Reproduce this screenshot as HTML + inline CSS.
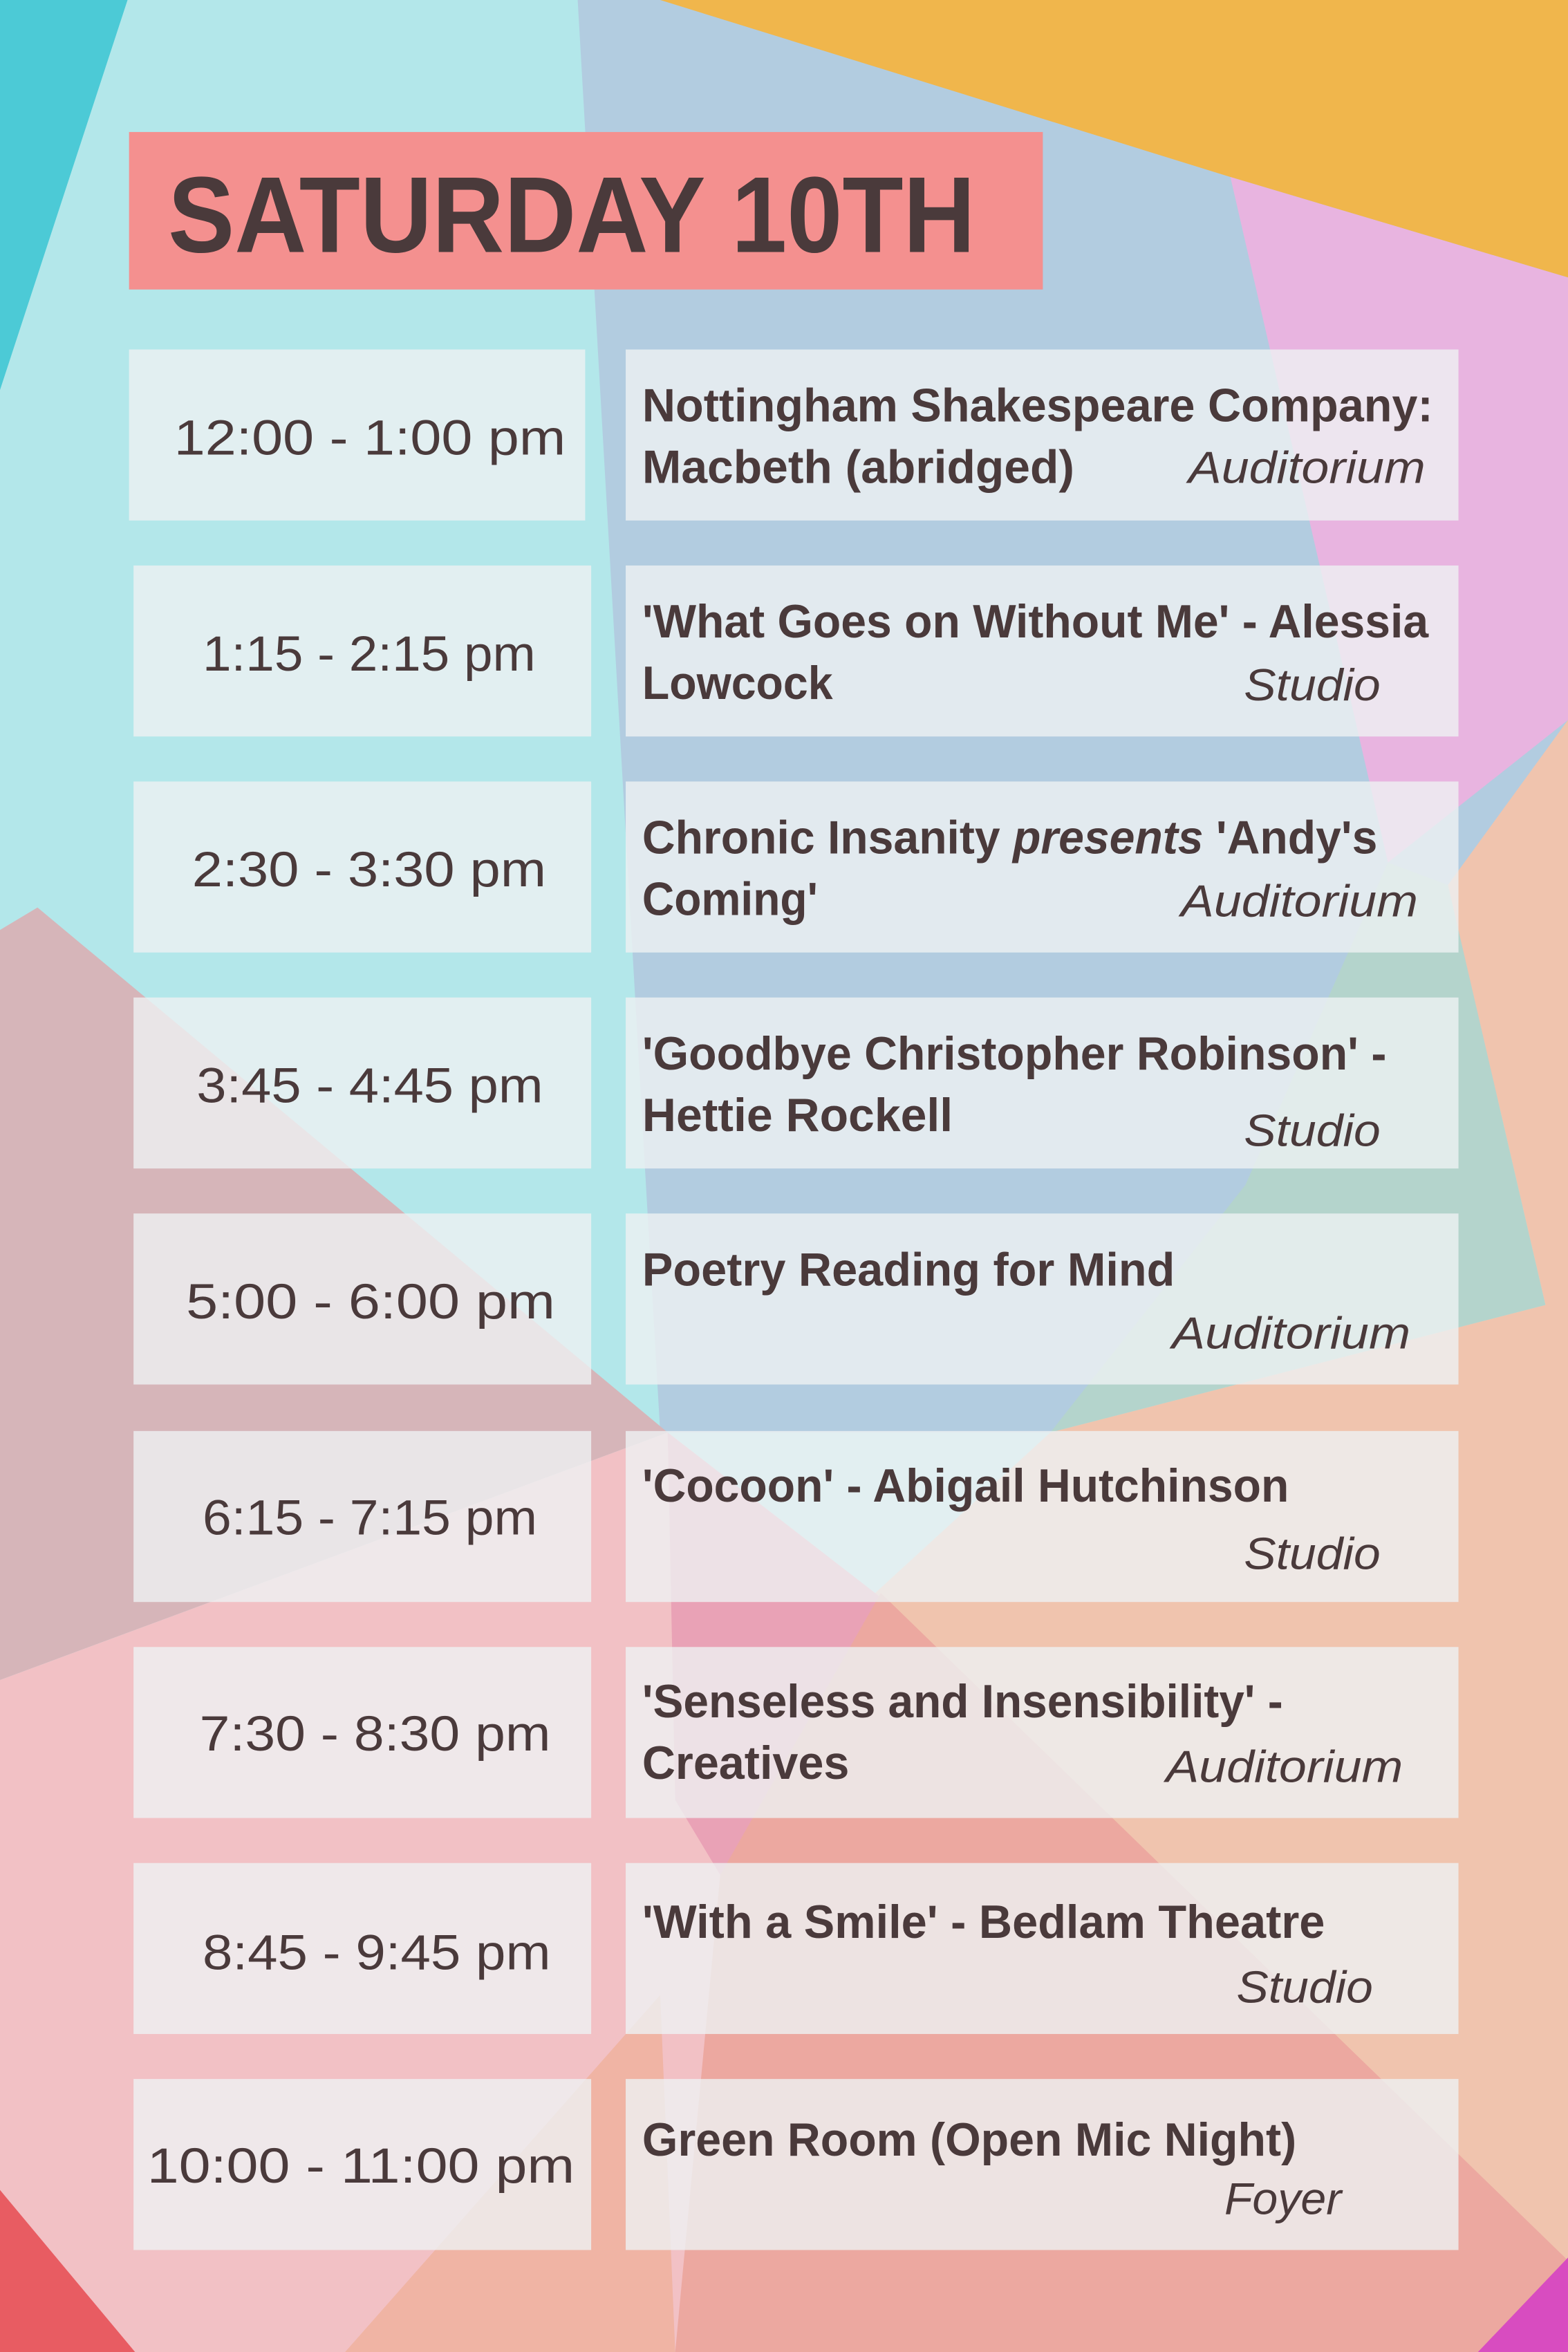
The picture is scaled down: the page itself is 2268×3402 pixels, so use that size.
<!DOCTYPE html>
<html><head><meta charset="utf-8">
<style>
html,body{margin:0;padding:0;width:2268px;height:3402px;overflow:hidden;background:#b3e7ea;}
svg{display:block;}
text{font-family:"Liberation Sans",sans-serif;fill:#4a3a3b;}
.t{font-size:33px;}
.b{font-size:31px;font-weight:bold;}
.i{font-size:30px;font-style:italic;}
</style></head><body>
<svg width="2268" height="3402" viewBox="0 0 1045 1568" preserveAspectRatio="none" xmlns="http://www.w3.org/2000/svg">
<rect width="1045" height="1568" fill="#b3e7ea"/>
<polygon points="385,0 1045,0 1045,700 700,955 440,955" fill="#b2cce0"/>
<polygon points="440,0 1045,0 1045,185 820,118" fill="#f0b64c"/>
<polygon points="820,118 1045,185 1045,480 925,575" fill="#e8b4e0"/>
<polygon points="925,575 965,590 1030,870 700,955 830,790" fill="#b4d4cc"/>
<polygon points="1045,480 965,590 1030,870 700,955 580,1065 1045,1568" fill="#f0c4ae"/>
<polygon points="0,620 25,605 445,955 0,1120" fill="#d6b5b9"/>
<polygon points="0,1120 445,955 600,1075 450,1568 0,1568" fill="#f2c1c5"/>
<polygon points="445,955 600,1075 480,1250 450,1200" fill="#e9a2b6"/>
<polygon points="480,1250 587,1062 1045,1507 1045,1568 450,1568" fill="#eca8a0"/>
<polygon points="230,1568 440,1330 450,1568" fill="#f0b4a4"/>
<polygon points="0,1460 90,1568 0,1568" fill="#e85c62"/>
<polygon points="1045,1505 1045,1568 985,1568" fill="#d84cc0"/>
<polygon points="0,0 85,0 0,260" fill="#4ccad6"/>

<rect x="86" y="88" width="609" height="105" fill="#f4908f"/>
<text x="112" y="168" style="font-size:72px;font-weight:900" textLength="538" lengthAdjust="spacingAndGlyphs">SATURDAY 10TH</text>

<g fill="#eef1f2" fill-opacity="0.8">
<rect x="86" y="233" width="304" height="114"/>
<rect x="89" y="377" width="305" height="114"/>
<rect x="89" y="521" width="305" height="114"/>
<rect x="89" y="665" width="305" height="114"/>
<rect x="89" y="809" width="305" height="114"/>
<rect x="89" y="954" width="305" height="114"/>
<rect x="89" y="1098" width="305" height="114"/>
<rect x="89" y="1242" width="305" height="114"/>
<rect x="89" y="1386" width="305" height="114"/>
<rect x="417" y="233" width="555" height="114"/>
<rect x="417" y="377" width="555" height="114"/>
<rect x="417" y="521" width="555" height="114"/>
<rect x="417" y="665" width="555" height="114"/>
<rect x="417" y="809" width="555" height="114"/>
<rect x="417" y="954" width="555" height="114"/>
<rect x="417" y="1098" width="555" height="114"/>
<rect x="417" y="1242" width="555" height="114"/>
<rect x="417" y="1386" width="555" height="114"/>
</g>

<text class="t" x="116" y="303" textLength="261" lengthAdjust="spacingAndGlyphs">12:00 - 1:00 pm</text>
<text class="t" x="135" y="447" textLength="222" lengthAdjust="spacingAndGlyphs">1:15 - 2:15 pm</text>
<text class="t" x="128" y="591" textLength="236" lengthAdjust="spacingAndGlyphs">2:30 - 3:30 pm</text>
<text class="t" x="131" y="735" textLength="231" lengthAdjust="spacingAndGlyphs">3:45 - 4:45 pm</text>
<text class="t" x="124" y="879" textLength="246" lengthAdjust="spacingAndGlyphs">5:00 - 6:00 pm</text>
<text class="t" x="135" y="1023" textLength="223" lengthAdjust="spacingAndGlyphs">6:15 - 7:15 pm</text>
<text class="t" x="133" y="1167" textLength="234" lengthAdjust="spacingAndGlyphs">7:30 - 8:30 pm</text>
<text class="t" x="135" y="1313" textLength="232" lengthAdjust="spacingAndGlyphs">8:45 - 9:45 pm</text>
<text class="t" x="98" y="1455" textLength="285" lengthAdjust="spacingAndGlyphs">10:00 - 11:00 pm</text>

<text class="b" x="428" y="281" textLength="527" lengthAdjust="spacingAndGlyphs">Nottingham Shakespeare Company:</text>
<text class="b" x="428" y="322" textLength="288" lengthAdjust="spacingAndGlyphs">Macbeth (abridged)</text>
<text class="i" x="792" y="322" textLength="158" lengthAdjust="spacingAndGlyphs">Auditorium</text>

<text class="b" x="428" y="425" textLength="524" lengthAdjust="spacingAndGlyphs">'What Goes on Without Me' - Alessia</text>
<text class="b" x="428" y="466" textLength="127" lengthAdjust="spacingAndGlyphs">Lowcock</text>
<text class="i" x="829" y="467" textLength="91" lengthAdjust="spacingAndGlyphs">Studio</text>

<text class="b" x="428" y="569" textLength="490" lengthAdjust="spacingAndGlyphs">Chronic Insanity <tspan font-style="italic">presents</tspan> 'Andy's</text>
<text class="b" x="428" y="610" textLength="117" lengthAdjust="spacingAndGlyphs">Coming'</text>
<text class="i" x="787" y="611" textLength="158" lengthAdjust="spacingAndGlyphs">Auditorium</text>

<text class="b" x="428" y="713" textLength="496" lengthAdjust="spacingAndGlyphs">'Goodbye Christopher Robinson' -</text>
<text class="b" x="428" y="754" textLength="207" lengthAdjust="spacingAndGlyphs">Hettie Rockell</text>
<text class="i" x="829" y="764" textLength="91" lengthAdjust="spacingAndGlyphs">Studio</text>

<text class="b" x="428" y="857" textLength="355" lengthAdjust="spacingAndGlyphs">Poetry Reading for Mind</text>
<text class="i" x="781" y="899" textLength="159" lengthAdjust="spacingAndGlyphs">Auditorium</text>

<text class="b" x="428" y="1001" textLength="431" lengthAdjust="spacingAndGlyphs">'Cocoon' - Abigail Hutchinson</text>
<text class="i" x="829" y="1046" textLength="91" lengthAdjust="spacingAndGlyphs">Studio</text>

<text class="b" x="428" y="1145" textLength="427" lengthAdjust="spacingAndGlyphs">'Senseless and Insensibility' -</text>
<text class="b" x="428" y="1186" textLength="138" lengthAdjust="spacingAndGlyphs">Creatives</text>
<text class="i" x="777" y="1188" textLength="158" lengthAdjust="spacingAndGlyphs">Auditorium</text>

<text class="b" x="428" y="1292" textLength="455" lengthAdjust="spacingAndGlyphs">'With a Smile' - Bedlam Theatre</text>
<text class="i" x="824" y="1335" textLength="91" lengthAdjust="spacingAndGlyphs">Studio</text>

<text class="b" x="428" y="1437" textLength="436" lengthAdjust="spacingAndGlyphs">Green Room (Open Mic Night)</text>
<text class="i" x="816" y="1476" textLength="78" lengthAdjust="spacingAndGlyphs">Foyer</text>
</svg>
</body></html>
